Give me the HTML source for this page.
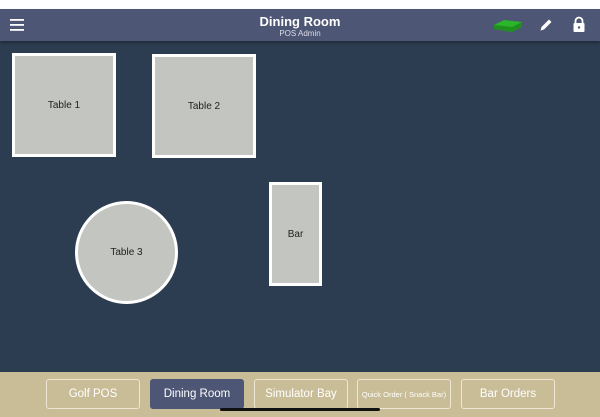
<!DOCTYPE html>
<html><head><style>
*{margin:0;padding:0;box-sizing:border-box}
body{width:600px;height:417px;overflow:hidden;background:#2c3d51;font-family:"Liberation Sans",sans-serif;position:relative}
.top{position:absolute;left:0;top:0;width:600px;height:9px;background:#fff}
.hdr{position:absolute;left:0;top:9px;width:600px;height:32px;background:#4d5674;box-shadow:0 2px 3px rgba(0,0,0,.3)}
.t1{position:absolute;top:5px;width:600px;text-align:center;color:#fff;font-size:13px;font-weight:bold}
.t2{position:absolute;top:20px;width:600px;text-align:center;color:#dcdce6;font-size:8px}
.tb{position:absolute;background:#c3c5c1;border:3px solid #fff;display:flex;align-items:center;justify-content:center;font-size:10px;color:#222}
.ftr{position:absolute;left:0;top:372px;width:600px;height:45px;background:#c8bd97}
.b{position:absolute;top:379px;width:94px;height:30px;border:1.5px solid #ece6d2;border-radius:3px;color:#fff;font-size:11.5px;display:flex;align-items:center;justify-content:center;white-space:nowrap}
</style></head><body>
<div class="top"></div>
<div class="hdr">
<svg style="position:absolute;left:10px;top:10px" width="14" height="12"><rect y="0" width="14" height="1.8" fill="#fff"/><rect y="5" width="14" height="1.8" fill="#fff"/><rect y="10" width="14" height="1.8" fill="#fff"/></svg>
<div class="t1">Dining Room</div>
<div class="t2">POS Admin</div>
<svg style="position:absolute;left:492px;top:8px" width="32" height="16"><polygon points="2,8 12,3 30,5 30,10 20,15 2,12" fill="#2bb52b"/><polygon points="2,8 20,10 30,5 30,10 20,15 2,12" fill="#1f8f1f"/></svg>
<svg style="position:absolute;left:539px;top:9px" width="14" height="14"><path d="M1.5 12.5 L2.5 9 L10 1.5 L12.5 4 L5 11.5 Z" fill="#fff"/></svg>
<svg style="position:absolute;left:572px;top:7px" width="14" height="17"><path d="M3.5 7 V5 a3.5 3.5 0 0 1 7 0 V7" stroke="#fff" stroke-width="1.8" fill="none"/><rect x="1.5" y="7" width="11" height="9" rx="1" fill="#fff"/><circle cx="7" cy="11.5" r="1.2" fill="#4d5674"/></svg>
</div>
<div class="tb" style="left:12px;top:53px;width:104px;height:104px">Table 1</div>
<div class="tb" style="left:152px;top:54px;width:104px;height:104px">Table 2</div>
<div class="tb" style="left:75px;top:201px;width:103px;height:103px;border-radius:50%">Table 3</div>
<div class="tb" style="left:269px;top:182px;width:53px;height:104px">Bar</div>
<div class="ftr"></div>
<div class="b" style="left:46px">Golf POS</div>
<div class="b" style="left:150px;background:#4d5674;border-color:#4d5674">Dining Room</div>
<div class="b" style="left:254px">Simulator Bay</div>
<div class="b" style="left:357px;font-size:7.5px">Quick Order ( Snack Bar)</div>
<div class="b" style="left:461px">Bar Orders</div>
<div style="position:absolute;left:220px;top:408px;width:160px;height:3px;border-radius:2px;background:#111"></div>
</body></html>
